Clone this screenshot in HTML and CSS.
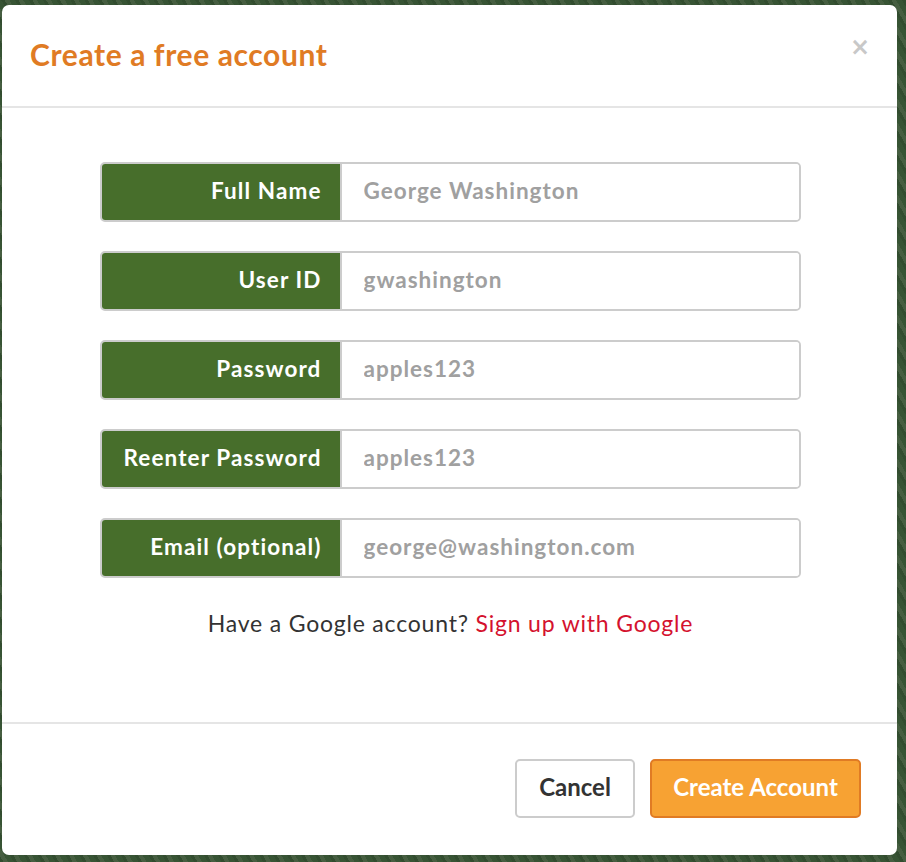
FILE: index.html
```html
<!DOCTYPE html>
<html lang="en">
<head>
<meta charset="utf-8">
<title>Create a free account</title>
<link rel="stylesheet" href="styles.css">
</head>
<body>
<div class="modal">
  <div class="modal-header">
    <h1 class="modal-title">Create a free account</h1>
    <button class="close" type="button">&times;</button>
  </div>
  <div class="modal-body">
    <form class="form">
      <div class="group"><label class="addon">Full Name</label><input class="field" type="text" placeholder="George Washington"></div>
      <div class="group"><label class="addon">User ID</label><input class="field" type="text" placeholder="gwashington"></div>
      <div class="group"><label class="addon">Password</label><input class="field" type="text" placeholder="apples123"></div>
      <div class="group"><label class="addon">Reenter Password</label><input class="field" type="text" placeholder="apples123"></div>
      <div class="group"><label class="addon">Email (optional)</label><input class="field" type="text" placeholder="george@washington.com"></div>
    </form>
    <p class="google">Have a Google account? <a href="#" class="google-link">Sign up with Google</a></p>
  </div>
  <div class="modal-footer">
    <button class="btn btn-default" type="button">Cancel</button>
    <button class="btn btn-primary" type="button">Create Account</button>
  </div>
</div>
</body>
</html>
```
FILE: styles.css
```css
html, body {
  margin: 0;
  padding: 0;
}
body {
  width: 906px;
  height: 862px;
  overflow: hidden;
  background: #3c5538;
  background-image: repeating-linear-gradient(60deg, rgba(20,50,20,0.25) 0 3px, rgba(110,130,100,0.2) 3px 7px, rgba(40,80,40,0.25) 7px 12px);
  font-family: Lato, "Open Sans", sans-serif;
  padding-top: 5px;
  box-sizing: border-box;
}
.modal {
  margin-left: 2px;
  width: 895px;
  height: 850px;
  background: #fff;
  border-radius: 7px;
  display: flex;
  flex-direction: column;
  overflow: hidden;
}
.modal-header {
  height: 103px;
  flex: none;
  box-sizing: border-box;
  border-bottom: 2px solid #e5e5e5;
  display: flex;
  align-items: flex-start;
  justify-content: space-between;
  padding: 0 27px 0 28px;
}
.modal-title {
  margin: 29px 0 0 0;
  font-size: 30px;
  font-weight: 700;
  color: #e07b24;
  line-height: 40px;
  letter-spacing: 0.6px;
}
.close {
  margin-top: 27px;
  border: 0;
  background: none;
  padding: 0;
  font-family: "DejaVu Sans", sans-serif;
  font-size: 24px;
  font-weight: 700;
  color: #c8c8c8;
  line-height: 30px;
  cursor: pointer;
}
.modal-body {
  flex: 1;
  padding-top: 54px;
  box-sizing: border-box;
}
.form {
  width: 701px;
  margin: 0 auto;
  display: flex;
  flex-direction: column;
  gap: 29px;
  padding-left: 1px;
}
.group {
  display: flex;
  height: 60px;
  box-sizing: border-box;
  border: 2px solid #cccccc;
  border-radius: 5px;
  overflow: hidden;
}
.addon {
  width: 240px;
  flex: none;
  box-sizing: border-box;
  background: #476e2b;
  color: #fff;
  font-weight: 700;
  font-size: 22.5px;
  letter-spacing: 1.1px;
  padding: 0 18px 4px 0;
  display: flex;
  align-items: center;
  justify-content: flex-end;
  border-right: 2px solid #cccccc;
}
.field {
  flex: 1;
  border: 0;
  outline: none;
  padding: 0 0 4px 22px;
  font-family: Lato, "Open Sans", sans-serif;
  font-size: 22.5px;
  font-weight: 700;
  letter-spacing: 1px;
  color: #555;
  background: #fff;
}
.field::placeholder {
  color: #a0a0a0;
  opacity: 1;
}
.google {
  margin: 30px 0 0 0;
  text-align: center;
  font-size: 23px;
  letter-spacing: 0.8px;
  color: #333;
  line-height: 30px;
  padding-left: 2px;
}
.google-link {
  color: #d4122e;
  text-decoration: none;
}
.modal-footer {
  border-top: 2px solid #e5e5e5;
  height: 133px;
  flex: none;
  box-sizing: border-box;
  display: flex;
  justify-content: flex-end;
  align-items: flex-start;
  gap: 15px;
  padding: 35px 36px 0 0;
}
.btn {
  height: 59px;
  border-radius: 5px;
  font-family: Lato, "Open Sans", sans-serif;
  font-size: 24px;
  font-weight: 700;
  padding: 0 20px 5px;
  cursor: pointer;
}
.btn-default {
  width: 120px;
  background: #fff;
  border: 2px solid #cccccc;
  color: #333;
}
.btn-primary {
  width: 211px;
  background: #f7a233;
  border: 2px solid #e07b24;
  color: #fff;
}
```
